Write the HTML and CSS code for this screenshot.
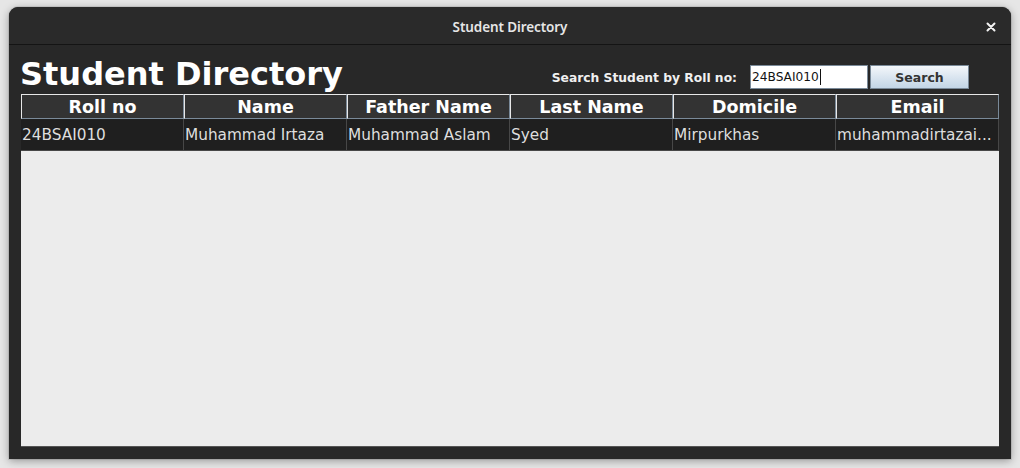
FILE: index.html
```html
<!DOCTYPE html>
<html>
<head>
<meta charset="utf-8">
<title>Student Directory</title>
<link rel="stylesheet" href="styles.css">
</head>
<body>
<div class="window">
  <div class="titlebar">
    <span class="title">Student Directory</span>
    <span class="close">
      <svg width="10" height="10" viewBox="0 0 10 10"><path d="M1.5 1.5 L8.5 8.5 M8.5 1.5 L1.5 8.5" stroke="#f2f2f2" stroke-width="2" stroke-linecap="round"/></svg>
    </span>
  </div>
  <div class="content">
    <div class="topbar">
      <h1 class="heading">Student Directory</h1>
      <div class="search">
        <span class="search-label">Search Student by Roll no:</span>
        <div class="field"><span class="field-text">24BSAI010</span><span class="caret"></span></div>
        <button class="btn">Search</button>
      </div>
    </div>
    <div class="table-wrap">
      <table class="grid">
        <thead>
          <tr>
            <th>Roll no</th>
            <th>Name</th>
            <th>Father Name</th>
            <th>Last Name</th>
            <th>Domicile</th>
            <th>Email</th>
          </tr>
        </thead>
        <tbody>
          <tr>
            <td>24BSAI010</td>
            <td>Muhammad Irtaza</td>
            <td>Muhammad Aslam</td>
            <td>Syed</td>
            <td>Mirpurkhas</td>
            <td>muhammadirtazai...</td>
          </tr>
        </tbody>
      </table>
    </div>
  </div>
</div>
</body>
</html>
```

FILE: styles.css
```css
html, body {
  margin: 0;
  padding: 0;
}
body {
  background: #e6e6e6;
  width: 1020px;
  height: 468px;
  overflow: hidden;
  padding-top: 7px;
  box-sizing: border-box;
}
.window {
  margin: 0 9px;
  width: 1002px;
  height: 452px;
  background: #282828;
  border-radius: 9px 9px 0 0;
  box-shadow: 0 2px 9px rgba(0, 0, 0, 0.35), 0 0 0 1px rgba(0, 0, 0, 0.08);
  display: flex;
  flex-direction: column;
  overflow: hidden;
}
.titlebar {
  height: 37px;
  flex: none;
  border-bottom: 1px solid #141414;
  background: #2a2a2a;
  display: flex;
  align-items: center;
  justify-content: center;
  position: relative;
}
.title {
  font-family: "Noto Sans", sans-serif;
  font-weight: 600;
  font-size: 13.5px;
  color: #e6e6e6;
  letter-spacing: -0.1px;
  padding-top: 2px;
}
.close {
  position: absolute;
  right: 15px;
  top: 15px;
  width: 10px;
  height: 10px;
  display: flex;
}
.content {
  flex: 1;
  display: flex;
  flex-direction: column;
  padding: 0 12px 12px 12px;
  background: #282828;
}
.topbar {
  height: 49px;
  flex: none;
  display: flex;
  justify-content: space-between;
  align-items: flex-start;
}
.heading {
  margin: 10px 0 0 -1px;
  font-family: "DejaVu Sans", sans-serif;
  font-weight: bold;
  font-size: 32px;
  line-height: 38px;
  color: #ffffff;
}
.search {
  margin-top: 20px;
  margin-right: 30px;
  display: flex;
  align-items: center;
  height: 24px;
}
.search-label {
  font-family: "DejaVu Sans", sans-serif;
  font-weight: bold;
  font-size: 12.3px;
  color: #f0f0f0;
  margin-right: 13px;
  padding-top: 1px;
}
.field {
  width: 118px;
  height: 24px;
  box-sizing: border-box;
  background: #ffffff;
  border: 1px solid #7a8a99;
  display: flex;
  align-items: center;
  padding-left: 1px;
}
.field-text {
  font-family: "DejaVu Sans", sans-serif;
  font-size: 12.2px;
  color: #111;
}
.caret {
  width: 1px;
  height: 16px;
  background: #111;
  margin-left: 1px;
}
.btn {
  margin-left: 2px;
  width: 99px;
  height: 24px;
  box-sizing: border-box;
  border: 1px solid #7a8a99;
  background: linear-gradient(#f4f7fa 0%, #dde7f1 45%, #c3d5e6 100%);
  font-family: "DejaVu Sans", sans-serif;
  font-weight: bold;
  font-size: 12.5px;
  color: #333333;
  padding: 0;
}
.table-wrap {
  flex: 1;
  background: #ececec;
  border-bottom: 1px solid #555;
  overflow: hidden;
}
.grid {
  width: 978px;
  table-layout: fixed;
  border-collapse: separate;
  border-spacing: 0;
}
.grid th {
  height: 25px;
  box-sizing: border-box;
  padding: 0;
  background: #333333;
  color: #ffffff;
  font-family: "DejaVu Sans", sans-serif;
  font-weight: bold;
  font-size: 17.5px;
  line-height: 20px;
  text-align: center;
  border-top: 1px solid #e8e8e8;
  border-left: 1px solid #e8e8e8;
  border-right: 1px solid #7a8a99;
  border-bottom: 1px solid #7a8a99;
  white-space: nowrap;
  overflow: hidden;
}
.grid td {
  height: 32px;
  box-sizing: border-box;
  padding: 1px 0 0 1px;
  background: #1f1f1f;
  color: #dedede;
  font-family: "DejaVu Sans", sans-serif;
  font-size: 15.3px;
  border-right: 1px solid #474747;
  border-bottom: 1px solid #474747;
  white-space: nowrap;
  overflow: hidden;
}
```
